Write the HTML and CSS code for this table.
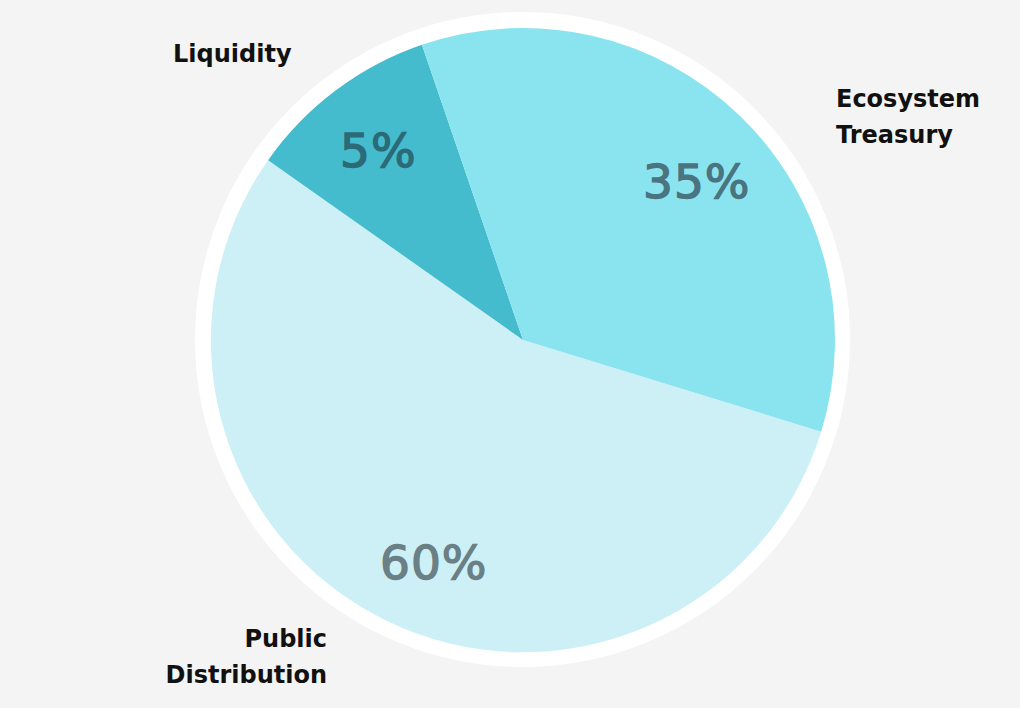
FILE: index.html
```html
<!DOCTYPE html>
<html lang="en">
<head>
<meta charset="utf-8">
<title>Token Allocation</title>
<link rel="stylesheet" href="styles.css">
</head>
<body>
<main class="chart">
  <svg class="pie" viewBox="0 0 1020 708" width="1020" height="708" xmlns="http://www.w3.org/2000/svg">
    <circle class="ring" cx="522.5" cy="339.5" r="327.5"/>
    <path class="slice slice-public" d="M523,340 L821.2,431.7 A312,312 0 1,1 268.1,160.2 Z"/>
    <path class="slice slice-liquidity" d="M523,340 L268.1,160.2 A312,312 0 0,1 421.9,44.8 Z"/>
    <path class="slice slice-treasury" d="M523,340 L421.9,44.8 A312,312 0 0,1 821.2,431.7 Z"/>

    <text class="pct pct-liquidity" x="340" y="167">5%</text>
    <text class="pct pct-treasury" x="643" y="198">35%</text>
    <text class="pct pct-public" x="380" y="579">60%</text>

    <text class="label" x="173" y="62">Liquidity</text>
    <text class="label" x="836" y="107">Ecosystem</text>
    <text class="label" x="836" y="143">Treasury</text>
    <text class="label label-end" x="327" y="647">Public</text>
    <text class="label label-end" x="327" y="683">Distribution</text>
  </svg>
</main>
</body>
</html>
```
FILE: styles.css
```css
html, body {
  margin: 0;
  padding: 0;
  background: #f4f4f4;
}

.chart {
  width: 1020px;
  height: 708px;
  overflow: hidden;
}

.pie {
  display: block;
}

.ring {
  fill: #ffffff;
}

.slice-public {
  fill: #cdf0f6;
}

.slice-liquidity {
  fill: #44bccd;
}

.slice-treasury {
  fill: #8ae4ef;
}

.pct {
  font-family: "DejaVu Sans", "Liberation Sans", sans-serif;
  font-size: 47px;
  font-weight: 400;
  letter-spacing: 1px;
  stroke-width: 1.4px;
}

.pct-liquidity {
  fill: #2b6a76;
  stroke: #2b6a76;
}

.pct-treasury {
  fill: #4a7480;
  stroke: #4a7480;
}

.pct-public {
  fill: #6a7f86;
  stroke: #6a7f86;
}

.label {
  font-family: "DejaVu Sans", "Liberation Sans", sans-serif;
  font-size: 24px;
  font-weight: 700;
  letter-spacing: 0;
  fill: #111111;
}

.label-end {
  text-anchor: end;
}
```
